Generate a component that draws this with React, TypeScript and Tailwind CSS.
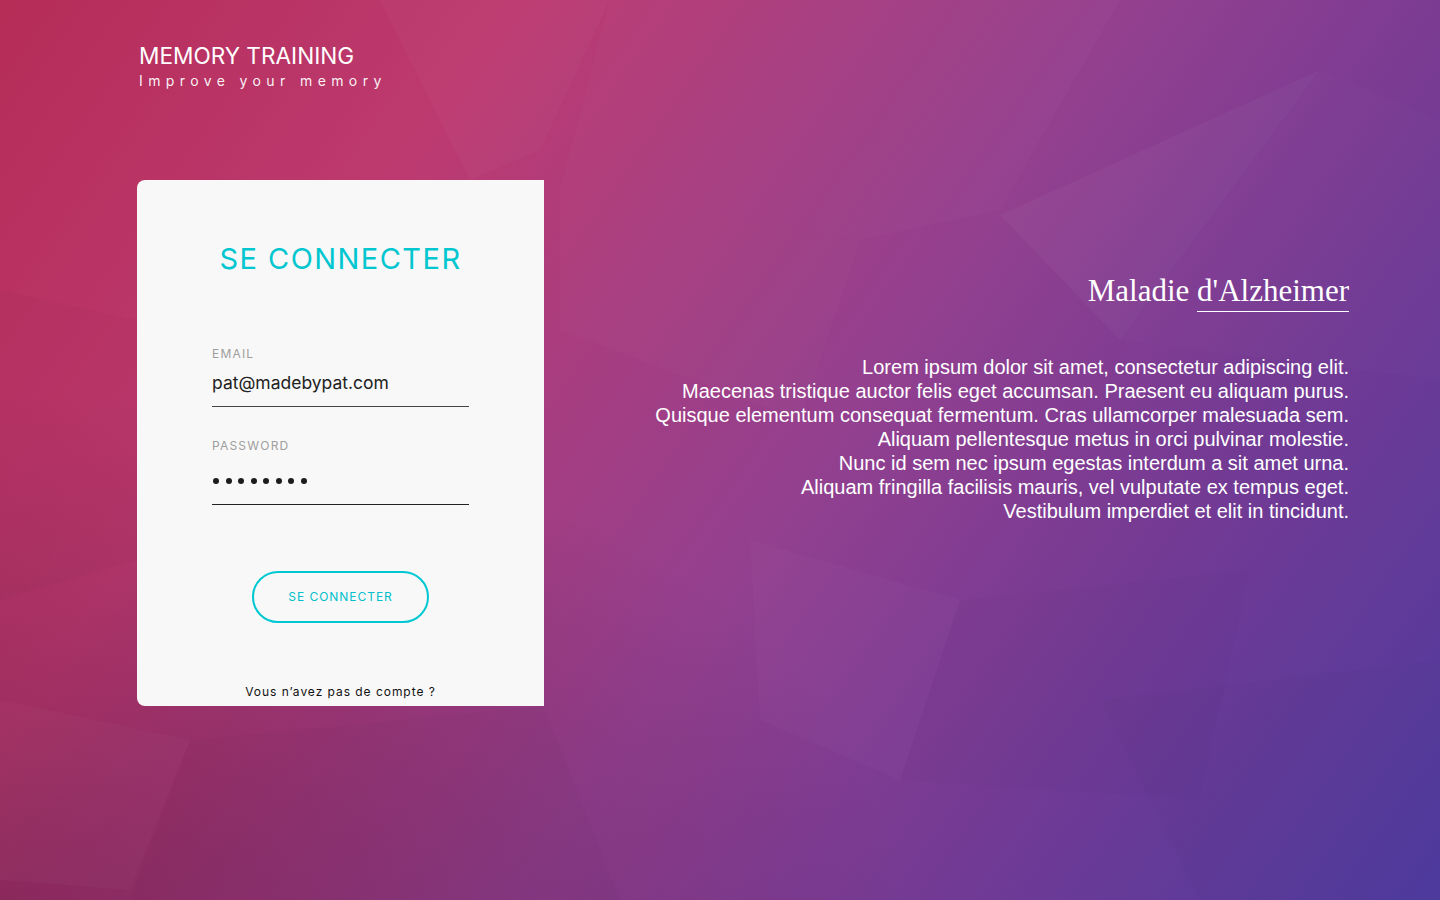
import React from "react";

const lorem = [
  "Lorem ipsum dolor sit amet, consectetur adipiscing elit.",
  "Maecenas tristique auctor felis eget accumsan. Praesent eu aliquam purus.",
  "Quisque elementum consequat fermentum. Cras ullamcorper malesuada sem.",
  "Aliquam pellentesque metus in orci pulvinar molestie.",
  "Nunc id sem nec ipsum egestas interdum a sit amet urna.",
  "Aliquam fringilla facilisis mauris, vel vulputate ex tempus eget.",
  "Vestibulum imperdiet et elit in tincidunt.",
];

// faint low-poly shapes laid over the gradient
function PolyBackdrop() {
  return (
    <svg
      className="pointer-events-none absolute inset-0 h-full w-full"
      viewBox="0 0 1440 900"
      preserveAspectRatio="none"
      aria-hidden
    >
      <polygon points="380,0 610,0 540,150 470,180" fill="#fff" fillOpacity="0.025" />
      <polygon points="610,0 900,0 860,240 560,190" fill="#fff" fillOpacity="0.018" />
      <polygon points="0,290 137,320 137,560 0,600" fill="#000" fillOpacity="0.02" />
      <polygon points="900,0 1120,0 1000,210 860,240" fill="#fff" fillOpacity="0.02" />
      <polygon points="1000,215 1320,70 1120,340" fill="#fff" fillOpacity="0.03" />
      <polygon points="1120,340 1320,70 1440,120 1440,380" fill="#fff" fillOpacity="0.012" />
      <polygon points="560,190 860,240 800,420 560,330" fill="#fff" fillOpacity="0.015" />
      <polygon points="0,700 190,740 130,890 0,880" fill="#fff" fillOpacity="0.025" />
      <polygon points="190,740 544,706 620,900 130,900" fill="#000" fillOpacity="0.015" />
      <polygon points="750,540 960,600 900,780 760,720" fill="#fff" fillOpacity="0.02" />
      <polygon points="960,600 1250,570 1200,800 900,780" fill="#000" fillOpacity="0.012" />
      <polygon points="1100,700 1440,660 1440,900 1200,900" fill="#000" fillOpacity="0.015" />
    </svg>
  );
}

function Field({ label, value, password }: { label: string; value: string; password?: boolean }) {
  return (
    <div className="flex flex-col">
      <span className="text-[12px] leading-[14px] tracking-[0.1em] text-[#9e9e9e]">{label}</span>
      {password ? (
        <div className="mt-[23px] flex h-[29px] items-start gap-[6.5px] border-b-[1.5px] border-[#222] pl-[1px] pt-[2px]">
          {Array.from({ length: 8 }).map((_, i) => (
            <span key={i} className="h-[6px] w-[6px] rounded-full bg-[#1c1c1c]" />
          ))}
        </div>
      ) : (
        <div className="mt-[11px] border-b-[1.5px] border-[#444] pb-[12px] text-[17.5px] leading-[22px] text-[#222]">
          {value}
        </div>
      )}
    </div>
  );
}

export default function App() {
  return (
    <div
      className="relative h-[900px] w-[1440px] overflow-hidden bg-[linear-gradient(125deg,#b52c57_0%,#bd3a70_25%,#93408f_55%,#733a94_75%,#4e3b9f_100%)]"
      style={{ fontFamily: "Inter, 'Noto Sans', sans-serif" }}
    >
      <div className="pointer-events-none absolute inset-0 bg-[radial-gradient(ellipse_90%_80%_at_0%_100%,rgba(70,10,50,0.38),transparent_70%)]" />
      <PolyBackdrop />
      <div className="relative flex h-full">
        {/* left column */}
        <div className="flex w-[544px] shrink-0 flex-col pl-[137px]">
          <div className="pl-[2px] pt-[41px]">
            <h1 className="text-[22.6px] font-normal leading-[30px] text-white">MEMORY TRAINING</h1>
            <p className="mt-[1px] text-[14px] leading-[18px] tracking-[0.385em] text-white/95">
              Improve your memory
            </p>
          </div>

          <div className="mt-[90px] flex h-[526px] w-[407px] flex-col items-center rounded-l-[8px] bg-[#f8f8f8]">
            <h2 className="mt-[61px] text-[29px] font-normal leading-[36px] tracking-[0.05em] text-[#00c6d0]">
              SE CONNECTER
            </h2>
            <div className="mt-[70px] flex w-[257px] flex-col gap-[32px]">
              <Field label="EMAIL" value="pat@madebypat.com" />
              <Field label="PASSWORD" value="" password />
            </div>
            <button className="mt-[66px] h-[52px] w-[177px] shrink-0 rounded-full border-2 border-[#00c8d2] text-[12px] tracking-[0.08em] text-[#00bfcc]">
              SE CONNECTER
            </button>
            <p className="mt-[60px] text-[12px] tracking-[0.08em] text-[#111]">Vous n’avez pas de compte ?</p>
          </div>
        </div>

        {/* right column */}
        <div className="flex flex-1 flex-col items-end pr-[91px] pt-[273px]">
          <h2
            className="text-[31px] leading-[36px] text-white"
            style={{ fontFamily: "'Liberation Serif', serif" }}
          >
            Maladie <span className="border-b border-white pb-[3px]">d'Alzheimer</span>
          </h2>
          <div
            className="mt-[46px] text-right text-[20px] leading-[24px] text-white"
            style={{ fontFamily: "'Liberation Sans', Arial, sans-serif" }}
          >
            {lorem.map((l) => (
              <p key={l}>{l}</p>
            ))}
          </div>
        </div>
      </div>
    </div>
  );
}
